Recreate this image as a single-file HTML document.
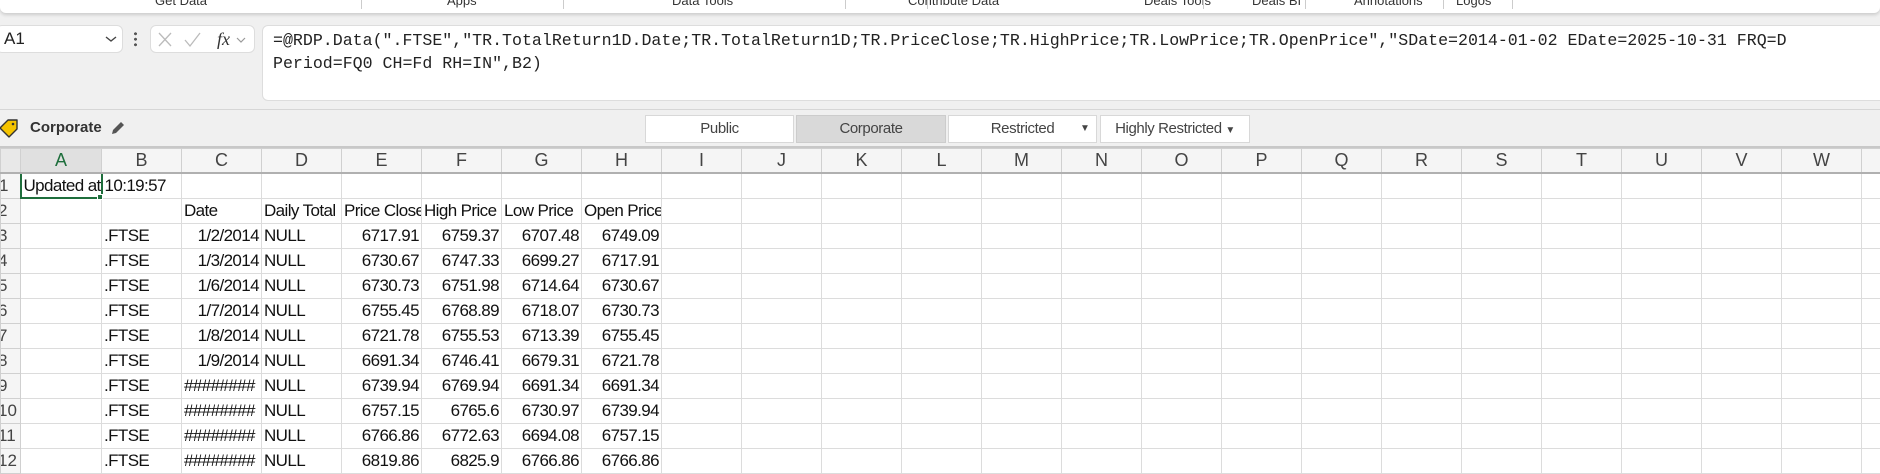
<!DOCTYPE html>
<html><head><meta charset="utf-8"><style>
*{box-sizing:border-box;margin:0;padding:0}
body{width:1880px;height:459px;overflow:hidden;background:#f0f0f0;position:relative;font-family:"Liberation Sans",sans-serif;color:#222}
.ab{position:absolute}
.rib{left:0;top:0;width:1880px;height:13px;background:#fff;box-shadow:0 2px 3px rgba(0,0,0,.15);border-radius:0 0 6px 6px}
.rl{position:absolute;top:-7px;font-size:13px;color:#333;white-space:nowrap}
.sep{position:absolute;top:0;width:1px;height:9px;background:#ccc}
.box{background:#fff;border:1px solid #ddd;border-radius:6px}
.fm{font-family:"Liberation Mono",monospace;font-size:16.6px;color:#222;line-height:23px;white-space:pre}
.btn{position:absolute;top:115px;height:28px;background:#fff;border:1px solid #d8d8d8;font-size:15px;letter-spacing:-0.4px;color:#444;text-align:center;line-height:26px}
table{position:absolute;left:0;top:148px;width:1941px;border-collapse:collapse;table-layout:fixed;font-size:17px;letter-spacing:-0.6px;color:#111}
td{height:25px;border:1px solid #dcdcdc;background:#fff;white-space:nowrap;overflow:hidden;padding:0 2px;line-height:23px}
td.r{text-align:right}
tr.h td{height:24px;background:#f5f5f5;text-align:center;color:#444;font-size:18px;letter-spacing:0;border-color:#d0d0d0;border-bottom:2px solid #b0b0b0}
td.rh{background:#f5f5f5;color:#444;padding:0;text-indent:-3px;border-color:#d0d0d0;letter-spacing:0}
</style></head><body>
<div class="ab rib">
<span class="rl" style="left:155px">Get Data</span><div class="sep" style="left:361px"></div>
<span class="rl" style="left:447px">Apps</span><div class="sep" style="left:563px"></div>
<span class="rl" style="left:672px">Data Tools</span><div class="sep" style="left:845px"></div>
<span class="rl" style="left:908px">Contribute Data</span><div class="sep" style="left:927px"></div>
<span class="rl" style="left:1144px">Deals Tools</span><div class="sep" style="left:1203px"></div>
<span class="rl" style="left:1252px">Deals BI</span><div class="sep" style="left:1305px"></div>
<span class="rl" style="left:1354px">Annotations</span><div class="sep" style="left:1443px"></div>
<span class="rl" style="left:1456px">Logos</span><div class="sep" style="left:1512px"></div>
</div>
<div class="ab box" style="left:-4px;top:25px;width:127px;height:28px"></div>
<div class="ab" style="left:4px;top:29px;font-size:17px;color:#222">A1</div>
<svg class="ab" style="left:104px;top:34px" width="14" height="10"><path d="M2 3l5 4 5-4" fill="none" stroke="#444" stroke-width="1.4"/></svg>
<div class="ab" style="left:134px;top:31px;width:3px;height:16px;background:radial-gradient(circle,#555 1.4px,transparent 1.6px) 0 0/3px 5.5px"></div>
<div class="ab box" style="left:150px;top:25px;width:105px;height:28px"></div>
<svg class="ab" style="left:157px;top:31px" width="95" height="18"><path d="M2 2l12 13M14 2L2 15" stroke="#bbb" stroke-width="1.3"/><path d="M28 9l5 6 10-13" fill="none" stroke="#bbb" stroke-width="1.3"/><text x="60" y="14" font-family="Liberation Serif,serif" font-style="italic" font-size="18" fill="#333">fx</text><path d="M80 7l4 4 4-4" fill="none" stroke="#999" stroke-width="1.2"/></svg>
<div class="ab box" style="left:262px;top:25px;width:1630px;height:76px"></div>
<div class="ab fm" style="left:273px;top:29px">=@RDP.Data(".FTSE","TR.TotalReturn1D.Date;TR.TotalReturn1D;TR.PriceClose;TR.HighPrice;TR.LowPrice;TR.OpenPrice","SDate=2014-01-02 EDate=2025-10-31 FRQ=D
Period=FQ0 CH=Fd RH=IN",B2)</div>
<div class="ab" style="left:0;top:109px;width:1880px;height:1px;background:#d6d6d6"></div>
<svg class="ab" style="left:-2px;top:118px" width="22" height="20"><path d="M2 10L10 2h9v9l-8 8z" fill="#f5c400" stroke="#333" stroke-width="1.4" stroke-linejoin="round"/><circle cx="15" cy="6" r="1.3" fill="#333"/></svg>
<div class="ab" style="left:30px;top:119px;font-weight:bold;font-size:15px;color:#333">Corporate</div>
<svg class="ab" style="left:110px;top:120px" width="16" height="16"><path d="M2 14l1-4 8-8 3 3-8 8z" fill="#555"/></svg>
<div class="btn" style="left:645px;width:149px">Public</div>
<div class="btn" style="left:796px;width:150px;background:#d9d9d9;border-color:#ccc">Corporate</div>
<div class="btn" style="left:948px;width:149px">Restricted<span style="position:absolute;left:131px;font-size:10px">▼</span></div>
<div class="btn" style="left:1100px;width:150px">Highly Restricted <span style="font-size:10px">▼</span></div>
<div class="ab" style="left:0;top:146px;width:1880px;height:2px;background:#c8c8c8"></div>
<table>
<colgroup><col style="width:20px"><col style="width:81px"><col style="width:80px"><col style="width:80px"><col style="width:80px"><col style="width:80px"><col style="width:80px"><col style="width:80px"><col style="width:80px"><col style="width:80px"><col style="width:80px"><col style="width:80px"><col style="width:80px"><col style="width:80px"><col style="width:80px"><col style="width:80px"><col style="width:80px"><col style="width:80px"><col style="width:80px"><col style="width:80px"><col style="width:80px"><col style="width:80px"><col style="width:80px"><col style="width:80px"><col style="width:80px"></colgroup>
<tr class="h"><td style="background:#e8e8e8"></td><td style="background:#e0e0e0;color:#1e6e3c">A</td><td>B</td><td>C</td><td>D</td><td>E</td><td>F</td><td>G</td><td>H</td><td>I</td><td>J</td><td>K</td><td>L</td><td>M</td><td>N</td><td>O</td><td>P</td><td>Q</td><td>R</td><td>S</td><td>T</td><td>U</td><td>V</td><td>W</td><td>X</td></tr>
<tr><td class="rh">1</td><td style="border:2px solid #1e6e3c">Updated at</td><td>10:19:57</td><td></td><td></td><td></td><td></td><td></td><td></td><td></td><td></td><td></td><td></td><td></td><td></td><td></td><td></td><td></td><td></td><td></td><td></td><td></td><td></td><td></td><td></td></tr>
<tr><td class="rh">2</td><td></td><td></td><td>Date</td><td>Daily Total</td><td>Price Close</td><td>High Price</td><td>Low Price</td><td>Open Price</td><td></td><td></td><td></td><td></td><td></td><td></td><td></td><td></td><td></td><td></td><td></td><td></td><td></td><td></td><td></td><td></td></tr>
<tr><td class="rh">3</td><td></td><td>.FTSE</td><td class="r">1/2/2014</td><td>NULL</td><td class="r">6717.91</td><td class="r">6759.37</td><td class="r">6707.48</td><td class="r">6749.09</td><td></td><td></td><td></td><td></td><td></td><td></td><td></td><td></td><td></td><td></td><td></td><td></td><td></td><td></td><td></td><td></td></tr>
<tr><td class="rh">4</td><td></td><td>.FTSE</td><td class="r">1/3/2014</td><td>NULL</td><td class="r">6730.67</td><td class="r">6747.33</td><td class="r">6699.27</td><td class="r">6717.91</td><td></td><td></td><td></td><td></td><td></td><td></td><td></td><td></td><td></td><td></td><td></td><td></td><td></td><td></td><td></td><td></td></tr>
<tr><td class="rh">5</td><td></td><td>.FTSE</td><td class="r">1/6/2014</td><td>NULL</td><td class="r">6730.73</td><td class="r">6751.98</td><td class="r">6714.64</td><td class="r">6730.67</td><td></td><td></td><td></td><td></td><td></td><td></td><td></td><td></td><td></td><td></td><td></td><td></td><td></td><td></td><td></td><td></td></tr>
<tr><td class="rh">6</td><td></td><td>.FTSE</td><td class="r">1/7/2014</td><td>NULL</td><td class="r">6755.45</td><td class="r">6768.89</td><td class="r">6718.07</td><td class="r">6730.73</td><td></td><td></td><td></td><td></td><td></td><td></td><td></td><td></td><td></td><td></td><td></td><td></td><td></td><td></td><td></td><td></td></tr>
<tr><td class="rh">7</td><td></td><td>.FTSE</td><td class="r">1/8/2014</td><td>NULL</td><td class="r">6721.78</td><td class="r">6755.53</td><td class="r">6713.39</td><td class="r">6755.45</td><td></td><td></td><td></td><td></td><td></td><td></td><td></td><td></td><td></td><td></td><td></td><td></td><td></td><td></td><td></td><td></td></tr>
<tr><td class="rh">8</td><td></td><td>.FTSE</td><td class="r">1/9/2014</td><td>NULL</td><td class="r">6691.34</td><td class="r">6746.41</td><td class="r">6679.31</td><td class="r">6721.78</td><td></td><td></td><td></td><td></td><td></td><td></td><td></td><td></td><td></td><td></td><td></td><td></td><td></td><td></td><td></td><td></td></tr>
<tr><td class="rh">9</td><td></td><td>.FTSE</td><td>########</td><td>NULL</td><td class="r">6739.94</td><td class="r">6769.94</td><td class="r">6691.34</td><td class="r">6691.34</td><td></td><td></td><td></td><td></td><td></td><td></td><td></td><td></td><td></td><td></td><td></td><td></td><td></td><td></td><td></td><td></td></tr>
<tr><td class="rh">10</td><td></td><td>.FTSE</td><td>########</td><td>NULL</td><td class="r">6757.15</td><td class="r">6765.6</td><td class="r">6730.97</td><td class="r">6739.94</td><td></td><td></td><td></td><td></td><td></td><td></td><td></td><td></td><td></td><td></td><td></td><td></td><td></td><td></td><td></td><td></td></tr>
<tr><td class="rh">11</td><td></td><td>.FTSE</td><td>########</td><td>NULL</td><td class="r">6766.86</td><td class="r">6772.63</td><td class="r">6694.08</td><td class="r">6757.15</td><td></td><td></td><td></td><td></td><td></td><td></td><td></td><td></td><td></td><td></td><td></td><td></td><td></td><td></td><td></td><td></td></tr>
<tr><td class="rh">12</td><td></td><td>.FTSE</td><td>########</td><td>NULL</td><td class="r">6819.86</td><td class="r">6825.9</td><td class="r">6766.86</td><td class="r">6766.86</td><td></td><td></td><td></td><td></td><td></td><td></td><td></td><td></td><td></td><td></td><td></td><td></td><td></td><td></td><td></td><td></td></tr>
</table>
<div class="ab" style="left:97px;top:194px;width:6px;height:6px;background:#1e6e3c;border:1px solid #fff"></div>
</body></html>
